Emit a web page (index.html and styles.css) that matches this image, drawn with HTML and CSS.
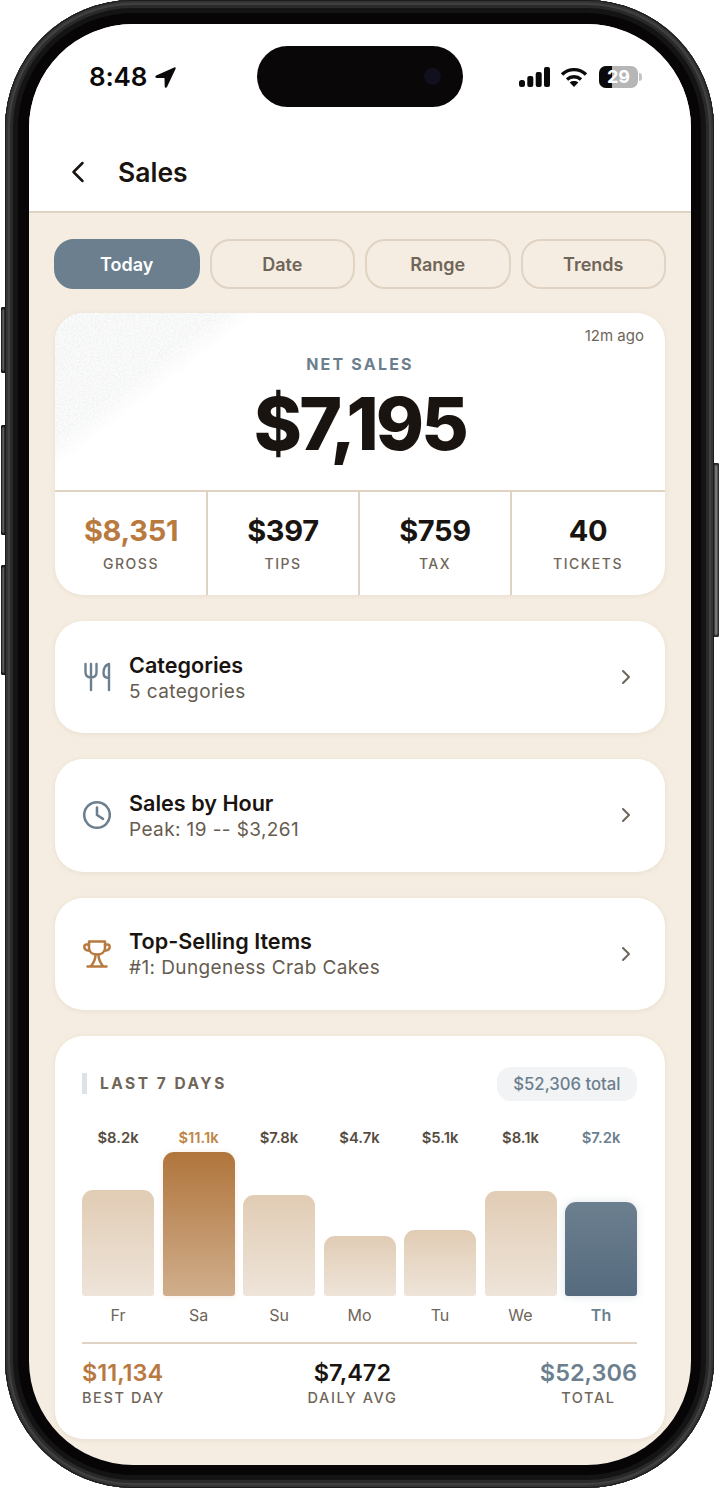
FILE: index.html
```html
<!DOCTYPE html>
<html lang="en">
<head>
<meta charset="utf-8">
<title>Sales</title>
<link rel="stylesheet" href="styles.css">
</head>
<body>
<div class="device">
  <span class="side side-a"></span><span class="side side-b"></span><span class="side side-c"></span><span class="side side-d"></span>
  <div class="screen">
    <div class="island"><span class="camera"></span></div>
    <header class="top">
      <div class="status">
        <div class="status-left">
          <span class="time">8:48</span>
          <svg class="loc" width="21" height="21" viewBox="0 0 21 21"><path d="M19.200.4 1.200 8.600c-1.400.6-1 2.300.4 2.300l7.900.2.2 8.300c0 1.400 1.700 1.800 2.300.5L20.600 1.800c.4-1-.4-1.800-1.400-1.400z" fill="#0b090a"/></svg>
        </div>
        <div class="status-right">
          <svg width="31" height="20" viewBox="0 0 31 20"><g fill="#0b090a"><rect x="0" y="13" width="6" height="7" rx="2.500"/><rect x="8.300" y="9" width="6" height="11" rx="2"/><rect x="16.700" y="5" width="6" height="15" rx="2"/><rect x="25" y="0" width="6" height="20" rx="2"/></g></svg>
          <svg class="wifi" width="28" height="20" viewBox="0 0 28 20"><g fill="none" stroke="#0b090a" stroke-width="3.400"><path d="M2 7.500C9 1 19 1 26 7.500"/><path d="M7 12.500c4-3.600 10-3.600 14 0"/></g><path d="M14 20l-4.300-4.500c2.500-1.900 6.100-1.900 8.600 0z" fill="#0b090a"/></svg>
          <div class="battery"><span class="battery-fill"></span><span class="battery-num">29</span><span class="battery-cap"></span></div>
        </div>
      </div>
      <div class="titlebar">
        <svg class="back" width="14" height="22" viewBox="0 0 14 22"><path d="M11.500 2 2.500 11l9 9" fill="none" stroke="#1a1410" stroke-width="2.500" stroke-linecap="round" stroke-linejoin="round"/></svg>
        <h1 class="title">Sales</h1>
      </div>
    </header>
    <main class="content">
      <nav class="tabs">
        <span class="tab tab-active">Today</span>
        <span class="tab">Date</span>
        <span class="tab">Range</span>
        <span class="tab">Trends</span>
      </nav>

      <section class="card net">
        <div class="net-hero">
          <svg class="grain" width="215" height="165" viewBox="0 0 215 165" aria-hidden="true">
            <defs>
              <filter id="noise" x="0" y="0" width="100%" height="100%">
                <feTurbulence type="fractalNoise" baseFrequency="0.55" numOctaves="2" seed="4"/>
                <feColorMatrix values="0 0 0 0 .89  0 0 0 0 .9  0 0 0 0 .91  0 0 0 4 -1.500"/>
              </filter>
              <linearGradient id="fade" gradientUnits="userSpaceOnUse" x1="0" y1="0" x2="76" y2="99">
                <stop offset="0" stop-color="#fff"/>
                <stop offset="0.8" stop-color="#fff" stop-opacity=".9"/>
                <stop offset="1" stop-color="#fff" stop-opacity="0"/>
              </linearGradient>
              <mask id="fademask"><rect width="215" height="165" fill="url(#fade)"/></mask>
            </defs>
            <g mask="url(#fademask)"><rect width="215" height="165" fill="#fbfbfb"/><rect width="215" height="165" filter="url(#noise)"/></g>
          </svg>
          <span class="ago">12m ago</span>
          <div class="net-label">NET SALES</div>
          <div class="net-value">$7,195</div>
        </div>
        <div class="stats">
          <div class="stat"><div class="stat-value copper">$8,351</div><div class="stat-label">GROSS</div></div>
          <div class="stat"><div class="stat-value">$397</div><div class="stat-label">TIPS</div></div>
          <div class="stat"><div class="stat-value">$759</div><div class="stat-label">TAX</div></div>
          <div class="stat"><div class="stat-value">40</div><div class="stat-label">TICKETS</div></div>
        </div>
      </section>

      <section class="card row">
        <svg class="row-icon" width="28" height="30" viewBox="0 0 28 30"><path d="M2.500 2v8c0 3.500 2.200 5.500 5.500 5.500s5.500-2 5.500-5.500V2M8 2v26M26 28V2c-3.500 1-5.500 4.500-5.500 9 0 3 1.500 5 5.500 5" fill="none" stroke="#6b7f8f" stroke-width="2.400" stroke-linecap="round" stroke-linejoin="round"/></svg>
        <div class="row-text"><div class="row-title">Categories</div><div class="row-sub">5 categories</div></div>
        <svg class="chev" width="10" height="16" viewBox="0 0 10 16"><path d="M2 2l6 6-6 6" fill="none" stroke="#6f6559" stroke-width="2" stroke-linecap="round" stroke-linejoin="round"/></svg>
      </section>

      <section class="card row">
        <svg class="row-icon" width="28" height="30" viewBox="0 0 28 30"><circle cx="14" cy="15" r="12.800" fill="none" stroke="#6b7f8f" stroke-width="2.600"/><path d="M14 7.500V15l6 3.800" fill="none" stroke="#6b7f8f" stroke-width="2.600" stroke-linecap="round" stroke-linejoin="round"/></svg>
        <div class="row-text"><div class="row-title">Sales by Hour</div><div class="row-sub">Peak: 19 -- $3,261</div></div>
        <svg class="chev" width="10" height="16" viewBox="0 0 10 16"><path d="M2 2l6 6-6 6" fill="none" stroke="#6f6559" stroke-width="2" stroke-linecap="round" stroke-linejoin="round"/></svg>
      </section>

      <section class="card row">
        <svg class="row-icon" width="28" height="30" viewBox="0 0 28 30"><g fill="none" stroke="#b87a3f" stroke-width="2.500" stroke-linecap="round" stroke-linejoin="round"><path d="M6 2.500h16v6.500c0 4-3.500 6.500-8 6.500s-8-2.500-8-6.500z"/><path d="M6 5.500H3.500C2 5.500 1.300 6.500 1.300 8c0 2 2 3.500 5.200 3.800M22 5.500h2.500c1.500 0 2.200 1 2.200 2.500 0 2-2 3.500-5.200 3.800"/><path d="M12.500 15.500c0 4-1.500 8-4.500 11.500M15.500 15.500c0 4 1.500 8 4.500 11.500M4.500 27.500h19"/></g></svg>
        <div class="row-text"><div class="row-title">Top-Selling Items</div><div class="row-sub">#1: Dungeness Crab Cakes</div></div>
        <svg class="chev" width="10" height="16" viewBox="0 0 10 16"><path d="M2 2l6 6-6 6" fill="none" stroke="#6f6559" stroke-width="2" stroke-linecap="round" stroke-linejoin="round"/></svg>
      </section>

      <section class="card chart-card">
        <div class="chart-head">
          <div class="chart-title">LAST 7 DAYS</div>
          <div class="pill">$52,306 total</div>
        </div>
        <div class="chart">
          <div class="col"><div class="col-value">$8.2k</div><div class="col-track"><div class="bar" style="height:106px"></div></div><div class="col-day">Fr</div></div>
          <div class="col col-best"><div class="col-value">$11.1k</div><div class="col-track"><div class="bar" style="height:144px"></div></div><div class="col-day">Sa</div></div>
          <div class="col"><div class="col-value">$7.8k</div><div class="col-track"><div class="bar" style="height:101px"></div></div><div class="col-day">Su</div></div>
          <div class="col"><div class="col-value">$4.7k</div><div class="col-track"><div class="bar" style="height:60px"></div></div><div class="col-day">Mo</div></div>
          <div class="col"><div class="col-value">$5.1k</div><div class="col-track"><div class="bar" style="height:66px"></div></div><div class="col-day">Tu</div></div>
          <div class="col"><div class="col-value">$8.1k</div><div class="col-track"><div class="bar" style="height:105px"></div></div><div class="col-day">We</div></div>
          <div class="col col-today"><div class="col-value">$7.2k</div><div class="col-track"><div class="bar" style="height:94px"></div></div><div class="col-day">Th</div></div>
        </div>
        <div class="summary">
          <div class="sum sum-left"><div class="sum-value copper">$11,134</div><div class="sum-label">BEST DAY</div></div>
          <div class="sum"><div class="sum-value">$7,472</div><div class="sum-label">DAILY AVG</div></div>
          <div class="sum"><div class="sum-value slate">$52,306</div><div class="sum-label">TOTAL</div></div>
        </div>
      </section>
    </main>
  </div>
</div>
</body>
</html>
```
FILE: styles.css
```css
* { box-sizing: border-box; }
html, body { margin: 0; padding: 0; background: #fff; }
body { font-family: Inter, "Liberation Sans", sans-serif; color: #1a1410; width: 720px; height: 1489px; overflow: hidden; }

.device { position: relative; margin-left: 5px; width: 709px; height: 1488px; border-radius: 128px; background: #070506; padding: 24px 23px 23px 24px; box-shadow: inset 0 0 0 1px #1c1c1c, inset 0 0 0 3px #353535, inset 0 0 0 5px #414141, inset 0 0 0 8px #2a2a2a, inset 0 0 0 13px #141414; }
.side { position: absolute; width: 5px; }
.side-a, .side-b, .side-c { left: -4px; width: 4px; border-radius: 2px 0 0 2px; background: linear-gradient(90deg, #1c1c1c 0, #707070 55%, #3a3a3a 100%); box-shadow: inset 0 2px 2px #111, inset 0 -2px 2px #111; }
.side-a { top: 307px; height: 66px; }
.side-b { top: 425px; height: 110px; }
.side-c { top: 565px; height: 110px; }
.side-d { right: -5px; top: 463px; height: 174px; border-radius: 0 2px 2px 0; background: linear-gradient(90deg, #555 0, #8a8a8a 40%, #2a2a2a 100%); box-shadow: inset 0 2px 2px #222, inset 0 -2px 2px #222; }

.screen { position: relative; width: 662px; height: 1441px; border-radius: 104px; overflow: hidden; background: #f5ede1; display: flex; flex-direction: column; }

.island { position: absolute; left: 228px; top: 22px; width: 206px; height: 61px; border-radius: 31px; background: #0a0708; }
.camera { position: absolute; right: 22px; top: 22px; width: 17px; height: 17px; border-radius: 50%; background: #10101f; }

.top { background: #fff; height: 189px; border-bottom: 2px solid #e0d3c3; flex: none; }
.status { height: 123px; display: flex; justify-content: space-between; align-items: flex-start; padding: 41px 53px 0 60px; }
.status-left { display: flex; align-items: center; gap: 8px; height: 24px; }
.time { font-size: 26px; font-weight: 600; line-height: 24px; letter-spacing: -.2px; color: #0b090a; }
.status-right { display: flex; align-items: center; gap: 10px; height: 24px; }
.wifi { margin-right: 1px; }
.battery { position: relative; width: 39px; height: 22px; border-radius: 7px; background: #b6b6b6; color: #fff; font-size: 18px; font-weight: 700; display: flex; align-items: center; justify-content: center; }
.battery-fill { position: absolute; left: 0; top: 0; bottom: 0; width: 13px; background: #0b090a; border-radius: 7px 0 0 7px; }
.battery-num { position: relative; line-height: 22px; }
.battery-cap { position: absolute; right: -4px; top: 7px; width: 3px; height: 8px; border-radius: 0 3px 3px 0; background: #c4c4c4; }

.titlebar { display: flex; align-items: center; height: 50px; padding: 0 0 0 42px; }
.back { flex: none; }
.title { margin: 0 0 0 33px; font-size: 26.500px; font-weight: 600; line-height: 32px; color: #1a1410; }

.content { flex: 1; min-height: 0; padding: 26px 25px 26px 25px; display: flex; flex-direction: column; gap: 26px; }

.tabs { display: grid; grid-template-columns: repeat(4, 1fr); gap: 10px; margin: 0 0 -2px; height: 50px; flex: none; }
.tab { display: flex; align-items: center; justify-content: center; border: 2px solid #e0d3c3; border-radius: 20px; font-size: 18px; font-weight: 600; color: #6f6559; }
.tab-active { background: #6b7f8f; border-color: #6b7f8f; color: #fff; }

.card { background: #fff; border-radius: 28px; box-shadow: 0 1px 5px rgba(140, 120, 90, .12); margin: 0 1px; flex: none; }

.net { height: 282px; overflow: hidden; display: flex; flex-direction: column; }
.net-hero { position: relative; height: 179px; border-bottom: 2px solid #e0d3c3; text-align: center; flex: none; }
.grain { position: absolute; left: 0; top: 0; }
.ago { position: absolute; right: 21px; top: 14px; font-size: 15px; line-height: 18px; color: #6f6559; }
.net-label { position: relative; padding-top: 41px; font-size: 16px; font-weight: 700; line-height: 20px; letter-spacing: 2.200px; color: #6b7f8f; }
.net-value { position: relative; margin-top: 8px; font-size: 73px; font-weight: 800; line-height: 84px; letter-spacing: -2.800px; color: #1a1410; }

.stats { flex: 1; display: grid; grid-template-columns: 152px 152px 152px 1fr; }
.stat { text-align: center; padding-top: 21px; }
.stat + .stat { box-shadow: -1px 0 0 #e0d3c3, inset 1px 0 0 #e0d3c3; }
.stat-value { font-size: 29px; font-weight: 700; line-height: 36px; letter-spacing: -.3px; }
.stat-label { margin-top: 6px; font-size: 14px; font-weight: 500; line-height: 18px; letter-spacing: 1.500px; color: #6f6559; }
.copper { color: #b87a3f; }
.slate { color: #6b7f8f; }

.row { height: 112.340px; display: flex; align-items: center; padding: 0 34px 0 28px; }
.row-icon { flex: none; }
.row-text { flex: 1; margin: 2px 0 0 18px; }
.row-title { font-size: 21.600px; font-weight: 600; line-height: 26px; color: #1a1410; }
.row-sub { font-size: 19px; line-height: 27px; letter-spacing: .4px; color: #665c50; }
.chev { flex: none; }

.chart-card { flex: 1; padding: 31px 28px 0 27px; }
.chart-head { display: flex; justify-content: space-between; align-items: center; height: 34px; }
.chart-title { border-left: 5px solid #dde2e7; padding-left: 13px; height: 21px; font-size: 15.500px; font-weight: 700; line-height: 21px; letter-spacing: 2.500px; color: #6f6559; }
.pill { height: 34px; border-radius: 14px; padding: 0 16.500px; background: #f2f3f4; font-size: 16.700px; font-weight: 500; line-height: 34px; color: #6b7f8f; }

.chart { display: grid; grid-template-columns: repeat(7, 1fr); gap: 8.500px; margin-top: 27px; }
.col { text-align: center; }
.col-value { font-size: 14.800px; font-weight: 600; line-height: 20px; color: #564c40; }
.col-track { height: 148px; display: flex; align-items: flex-end; }
.bar { width: 100%; border-radius: 11px 11px 3px 3px; background: linear-gradient(180deg, #e1ccb4, #eee4d9); }
.col-day { margin-top: 9px; font-size: 16px; line-height: 20px; color: #6f6559; }
.col-best .col-value { color: #c08547; }
.col-best .bar { background: linear-gradient(180deg, #b0753c, #d0ae8c); box-shadow: 0 0 6px rgba(184, 122, 63, .12); }
.col-today .col-value { color: #6b7f8f; }
.col-today .col-day { color: #6b7f8f; font-weight: 600; }
.col-today .bar { background: linear-gradient(180deg, #6b7f8f, #566b7e); box-shadow: 0 0 10px rgba(107, 127, 143, .22); }

.summary { display: flex; justify-content: space-between; margin-top: 17px; border-top: 2px solid #e0d3c3; padding-top: 14px; }
.sum { text-align: center; }
.sum-left { text-align: left; }
.sum-value { font-size: 23.500px; font-weight: 600; line-height: 30px; }
.sum-label { font-size: 14.500px; font-weight: 500; line-height: 20px; letter-spacing: 1.600px; color: #6f6559; }
```
